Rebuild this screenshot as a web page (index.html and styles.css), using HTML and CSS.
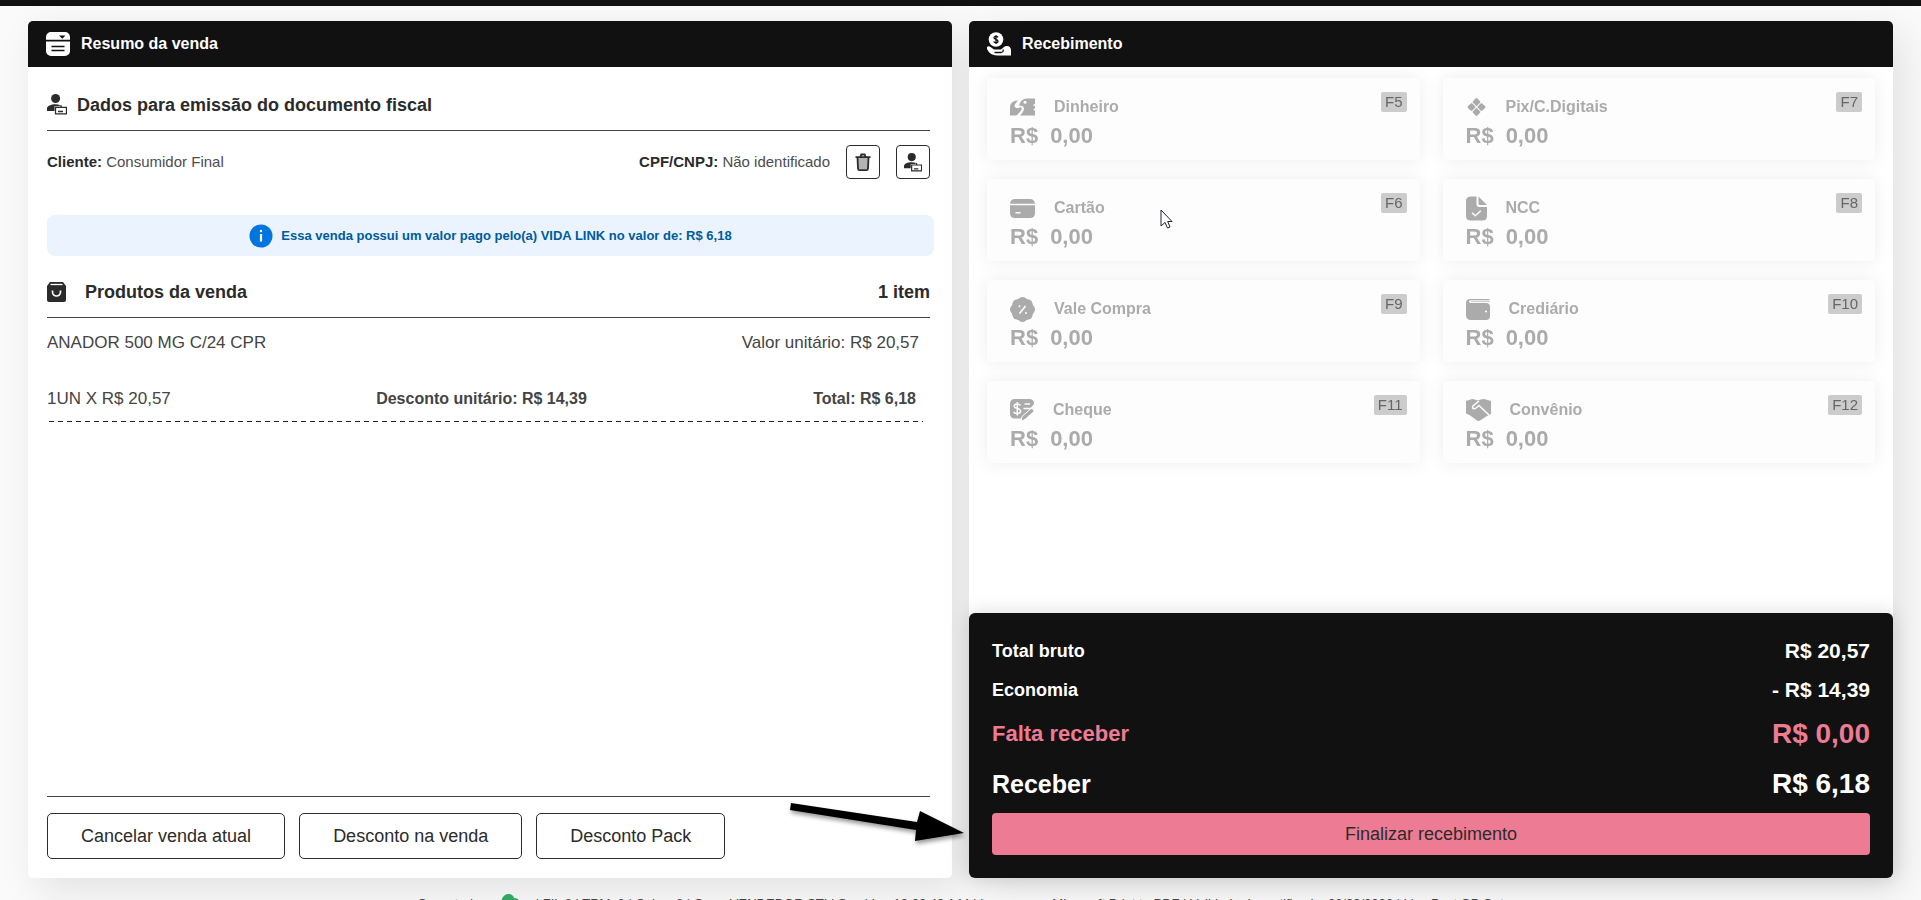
FILE: index.html
```html
<!DOCTYPE html>
<html lang="pt-BR">
<head>
<meta charset="utf-8">
<meta name="viewport" content="width=device-width, initial-scale=1">
<title>Recebimento da venda</title>
<link rel="stylesheet" href="styles.css">
</head>
<body>
<svg class="sprite" aria-hidden="true">
  <symbol id="person-card" viewBox="0 0 20 21">
    <circle cx="8.600" cy="4.500" r="4.500"/>
    <path d="M0 17v-2.500C0 12 4 10.300 8.600 10.300c1.500 0 3 .2 4.200.6v1.300H7.500V17z"/>
    <path d="M8.500 13.300h11v6.500h-11zM14 13.500v-2.500M11 17.500h5" fill="none" stroke="currentColor" stroke-width="1.300"/>
  </symbol>
</svg>
<div class="topbar"></div>
<main class="workspace">
  <section class="panel">
    <header class="panel-head">
      <svg class="head-icon" viewBox="0 0 24 24"><path fill="#fff" d="M5 0h14a5 5 0 0 1 5 5v2.700H0V5a5 5 0 0 1 5-5zM0 9.500h24V19a5 5 0 0 1-5 5H5a5 5 0 0 1-5-5z"/><path fill="#111" d="M13 3.500h6.500l-3.200 3.300z"/><path d="M5.500 14.500h13M5.500 18.500h13" stroke="#111" stroke-width="1.600"/></svg>
      <h1>Resumo da venda</h1>
    </header>
    <div class="sale">
      <div class="section-head">
        <svg class="person-icon"><use href="#person-card"/></svg>
        <h2>Dados para emissão do documento fiscal</h2>
      </div>
      <div class="customer">
        <p><b>Cliente:</b> Consumidor Final</p>
        <div class="document">
          <p><b>CPF/CNPJ:</b> Não identificado</p>
          <button class="icon-button" type="button" aria-label="Remover cliente"><svg width="16" height="19" viewBox="0 0 16 19"><path d="M3 5h10v11.500H3z" fill="#b3b3b3"/><path d="M2.500 4.500l.5 11q.1 1.700 1.600 1.700h6.800q1.500 0 1.600-1.700l.5-11M.5 4.200h15M5.500 3.800l.8-2.300h3.400l.8 2.300" fill="none" stroke="#2b2b2b" stroke-width="1.800"/></svg></button>
          <button class="icon-button" type="button" aria-label="Identificar cliente"><svg width="18" height="19"><use href="#person-card"/></svg></button>
        </div>
      </div>
      <div class="notice">
        <svg width="24" height="24" viewBox="0 0 24 24"><circle cx="12" cy="12" r="11.500" fill="#0074df"/><circle cx="12" cy="7" r="1.200" fill="#fff"/><path d="M12 10v7.500" stroke="#fff" stroke-width="2.200"/></svg>
        <strong>Essa venda possui um valor pago pelo(a) VIDA LINK no valor de: R$ 6,18</strong>
      </div>
      <div class="section-head products-head">
        <svg class="bag-icon" viewBox="0 0 19 20"><path fill="#2b2b2b" d="M3 0h13l3 4v14q0 2-2 2H2q-2 0-2-2V4z"/><path d="M3.500 2.500h12" stroke="#fff" stroke-width="1.300"/><path d="M5.500 8.500v1.500a4 4 0 0 0 8 0V8.500" fill="none" stroke="#fff" stroke-width="1.700"/></svg>
        <h2>Produtos da venda</h2>
        <strong class="count">1 item</strong>
      </div>
      <div class="product">
        <div class="product-name"><span>ANADOR 500 MG C/24 CPR</span><span>Valor unitário: R$ 20,57</span></div>
        <div class="product-values"><span>1UN X R$ 20,57</span><b>Desconto unitário: R$ 14,39</b><b>Total: R$ 6,18</b></div>
        <svg class="dashes" aria-hidden="true"><path d="M0 .5H4000" stroke="#222" stroke-width="1" stroke-dasharray="5 4"/></svg>
      </div>
      <div class="sale-actions">
        <button type="button">Cancelar venda atual</button>
        <button type="button">Desconto na venda</button>
        <button type="button">Desconto Pack</button>
      </div>
    </div>
  </section>

  <section class="panel">
    <header class="panel-head">
      <svg class="head-icon" viewBox="0 0 24 24"><circle cx="9" cy="7.500" r="7.300" fill="#fff"/><path d="M11 5.300C10.200 4 7 4 7 5.800S11 7.300 11 9.300 7.500 11 6.700 9.500M9 3v9" fill="none" stroke="#111" stroke-width="1.300"/><path fill="#fff" d="M0 15q1.500-1.500 3.500 0L7 17.500h7l3-2.500q1.500-1.300 3-1 3.500.2 4 4v5.500H10Q3 23.500 0 17z"/><path d="M7.500 20.500h6.500q3-.5 2-3" fill="none" stroke="#111" stroke-width="1.300"/></svg>
      <h1>Recebimento</h1>
    </header>
    <div class="methods">
      <button class="method" type="button"><span class="method-name"><svg width="25" height="18" viewBox="0 0 25 18"><path d="M0 17.500V9Q0 3 8 2.500L5.500 5.500Q3.500 8 5.500 9.500T10 9.200q2.500-.3 1.500 2.300T6.500 17.500z"/><path d="M9 7.500Q11 1 16 .5h9v5a4.200 4.200 0 0 0 0 7.500v4.500H10q4-4 4-7T9 7.500z"/><circle cx="15" cy="4.300" r="1.500" fill="#fdfdfd"/><circle cx="23.500" cy="9.200" r="1.800"/></svg>Dinheiro</span><span class="amount"><span>R$</span><span>0,00</span></span><kbd>F5</kbd></button>
      <button class="method" type="button"><span class="method-name"><svg width="21" height="18" viewBox="0 0 21 18"><g transform="translate(10.500 9)"><path d="M-4-5Q-1-9 0-9T4-5Q4-4.500 0-.8-4-4.500-4-5zM-4 5Q-1 9 0 9T4 5Q4 4.500 0 .8-4 4.500-4 5zM-5-4Q-9-1-9 0t4 4Q-4.500 4-.8 0-4.500-4-5-4zM5-4Q9-1 9 0T5 4Q4.500 4 .8 0 4.500-4 5-4z"/></g></svg>Pix/C.Digitais</span><span class="amount"><span>R$</span><span>0,00</span></span><kbd>F7</kbd></button>
      <button class="method" type="button"><span class="method-name"><svg width="25" height="19" viewBox="0 0 25 19"><path d="M5 0h15q4.500 0 5 4.800H0Q.5 0 5 0zM0 6.200h25V14q0 5-5 5H5q-5 0-5-5z"/><path d="M6 13.700h4" stroke="#fdfdfd" stroke-width="1.600" stroke-linecap="round"/></svg>Cartão</span><span class="amount"><span>R$</span><span>0,00</span></span><kbd>F6</kbd></button>
      <button class="method" type="button"><span class="method-name"><svg width="21" height="25" viewBox="0 0 21 25"><path d="M5 .5h5.500V8q0 3 3 3H21v9q0 4.500-4.500 4.500H5Q0 24.500 0 20V5Q0 .5 5 .5z"/><path d="M12.500.5 21 9h-7q-1.500 0-1.500-1.500z"/><path d="m6 16.700 3.300 3 5.500-5" fill="none" stroke="#fdfdfd" stroke-width="1.500"/></svg>NCC</span><span class="amount"><span>R$</span><span>0,00</span></span><kbd>F8</kbd></button>
      <button class="method" type="button"><span class="method-name"><svg width="25" height="25" viewBox="0 0 25 25"><circle cx="12.500" cy="12.500" r="11.300"/><circle cx="12.500" cy="4.500" r="4.500"/><circle cx="18" cy="7" r="4.500"/><circle cx="20.500" cy="12.500" r="4.500"/><circle cx="18" cy="18" r="4.500"/><circle cx="12.500" cy="20.500" r="4.500"/><circle cx="7" cy="18" r="4.500"/><circle cx="4.500" cy="12.500" r="4.500"/><circle cx="7" cy="7" r="4.500"/><path d="m15.500 9-6 7.500" stroke="#fdfdfd" stroke-width="1.700"/><circle cx="9.500" cy="9.200" r="1" fill="#fdfdfd"/><circle cx="16" cy="16" r="1" fill="#fdfdfd"/></svg>Vale Compra</span><span class="amount"><span>R$</span><span>0,00</span></span><kbd>F9</kbd></button>
      <button class="method" type="button"><span class="method-name"><svg width="24" height="21" viewBox="0 0 24 21"><path d="M4 0h18q1.500 0 2 1.300H4.500Q3 1.300 3 2.500T4.500 4H20q4 0 4 4v9q0 4-4 4H5q-5 0-5-5V4q0-4 4-4z"/><path d="M5 2.600h19" stroke="currentColor" stroke-width=".6"/><circle cx="20" cy="12.500" r="1.100" fill="#fdfdfd"/></svg>Crediário</span><span class="amount"><span>R$</span><span>0,00</span></span><kbd>F10</kbd></button>
      <button class="method" type="button"><span class="method-name"><svg width="24" height="22" viewBox="0 0 24 22"><path d="M5 0h14q5 0 5 5L11.500 19.500H5q-5 0-5-5V5q0-5 5-5z"/><path d="M10.500 6.500Q8.500 4.500 5.800 5.300 3 6.500 5 8.500l4 1.500q3 2 .5 4-3 1.500-6-.8M7.300 3v13.500M14.500 5H20M13.500 9.500H24" fill="none" stroke="#fdfdfd" stroke-width="1.500"/><path d="m11 22 1-4.500L21 9.500q3.500 0 3 3L15.500 20q-2 1.700-4.500 2z" stroke="#fdfdfd" stroke-width="1"/></svg>Cheque</span><span class="amount"><span>R$</span><span>0,00</span></span><kbd>F11</kbd></button>
      <button class="method" type="button"><span class="method-name"><svg width="25" height="22" viewBox="0 0 25 22"><path d="M0 2 6 0q3 0 5.500 1.500Q15 0 18 0l7 2v13l-4 2-7 4.500q-1.500.8-3 0L3.500 16 0 14.500z"/><path d="m13 2-6 5Q6 9.500 8 9.700q1.500.3 5-3.200l10 9.500" fill="none" stroke="#fdfdfd" stroke-width="1.600"/></svg>Convênio</span><span class="amount"><span>R$</span><span>0,00</span></span><kbd>F12</kbd></button>
    </div>
    <div class="totals">
      <dl>
        <div><dt>Total bruto</dt><dd>R$ 20,57</dd></div>
        <div><dt>Economia</dt><dd>- R$ 14,39</dd></div>
        <div class="remaining"><dt>Falta receber</dt><dd>R$ 0,00</dd></div>
        <div class="receive"><dt>Receber</dt><dd>R$ 6,18</dd></div>
      </dl>
      <button class="finish" type="button">Finalizar recebimento</button>
    </div>
  </section>
</main>
<footer class="status"><span>Conectado:</span><svg width="20" height="14" viewBox="0 0 20 14"><path fill="#2fa866" d="M1 10C1-1 12-3 14 4q6 0 6 6v4H1z"/></svg><span>| FIL 8 | TRM: 8 | Caixa: 8 | Oper: VENDEDOR STI | Servidor: 10.22.42.144 | Impressora: Microsoft Print to PDF | Validade do certificado: 06/09/2026 | Linx Post OP Out</span></footer>
<svg class="arrow" width="190" height="60" viewBox="0 0 190 60" aria-hidden="true"><path d="M7 5 133 24 136 13 180 35 131 43 132 32 6 12z"/></svg>
<svg class="cursor" width="14" height="22" viewBox="0 0 14 22" aria-hidden="true"><path d="M1 1v16l4-3.500 2.500 5.500 2.500-1-2.300-5.500H12z" fill="#fff" stroke="#223" stroke-width="1"/></svg>
</body>
</html>
```
FILE: styles.css
```css
* { box-sizing: border-box; }
body {
  margin: 0;
  height: 100vh;
  overflow: hidden;
  display: flex;
  flex-direction: column;
  background: #fafafa;
  color: #2b2b2b;
  font: 16px/20px "Liberation Sans", Arial, sans-serif;
}
h1, h2, p, dl, dd { margin: 0; }
button { font: inherit; color: inherit; cursor: pointer; }
svg { flex: none; fill: currentColor; }
.sprite { position: absolute; width: 0; height: 0; }
.topbar { height: 6px; flex: none; background: #111; }
.workspace {
  flex: 1;
  min-height: 0;
  display: grid;
  grid-template-columns: 1fr 1fr;
  gap: 17px;
  padding: 15px 28px 0;
}
.panel {
  display: flex;
  flex-direction: column;
  background: #fff;
  border-radius: 5px;
  box-shadow: 10px 12px 40px rgba(0, 0, 0, .1);
}
.panel-head {
  position: relative;
  z-index: 1;
  display: flex;
  align-items: center;
  gap: 11px;
  height: 46px;
  flex: none;
  padding: 0 18px;
  border-radius: 5px 5px 0 0;
  background: #111;
  color: #fff;
}
.panel-head h1 { font-size: 16px; }
.head-icon { width: 24px; height: 24px; }
.sale {
  flex: 1;
  display: flex;
  flex-direction: column;
  padding: 12px 22px 19px 19px;
}
.section-head {
  display: flex;
  align-items: center;
  gap: 10px;
  height: 52px;
  border-bottom: 1px solid #444;
}
.section-head h2, .count { font-size: 18px; }
.count { margin-left: auto; }
.person-icon { width: 20px; height: 21px; }
.bag-icon { width: 19px; height: 20px; }
.customer {
  display: flex;
  align-items: center;
  justify-content: space-between;
  padding: 14px 0;
  color: #4d4d4d;
  font-size: 15px;
}
.customer b { color: #2b2b2b; }
.document { display: flex; align-items: center; gap: 16px; }
.icon-button {
  display: grid;
  place-items: center;
  width: 34px;
  height: 34px;
  padding: 0;
  background: #fff;
  border: 1px solid #2b2b2b;
  border-radius: 4px;
  color: #2b2b2b;
}
.notice {
  display: flex;
  align-items: center;
  justify-content: center;
  gap: 8px;
  height: 41px;
  margin: 22px -4px 10px 0;
  border-radius: 8px;
  background: #eaf3fe;
  color: #005b9c;
  font-size: 13px;
}
.products-head { gap: 19px; }
.product { color: #444; font-size: 17px; }
.product-name { display: flex; justify-content: space-between; padding: 15px 11px 18px 0; }
.product-values {
  display: grid;
  grid-template-columns: 1fr auto 1fr;
  padding: 18px 14px 12px 0;
}
.product-values b { font-size: 16px; }
.product-values :last-child { text-align: right; }
.dashes { display: block; width: calc(100% - 9px); height: 1px; margin-left: 2px; }
.sale-actions {
  display: flex;
  gap: 14px;
  margin-top: auto;
  padding-top: 16px;
  border-top: 1px solid #444;
}
.sale-actions button {
  height: 46px;
  padding: 0 33px;
  background: #fff;
  border: 1px solid #2b2b2b;
  border-radius: 5px;
  font-size: 18px;
}
.methods {
  display: grid;
  grid-template-columns: 1fr 1fr;
  gap: 19px 23px;
  padding: 11px 18px;
}
.method {
  position: relative;
  display: flex;
  flex-direction: column;
  height: 82px;
  padding: 14px 23px 0;
  border: 0;
  border-radius: 4px;
  background: #fdfdfd;
  color: #ababab;
  text-align: left;
  font-weight: bold;
  filter: drop-shadow(0 0 8px rgba(0, 0, 0, .07));
}
.method-name { display: flex; align-items: center; gap: 19px; height: 30px; }
.amount { display: flex; gap: 12px; font-size: 22px; line-height: 28px; }
.method kbd {
  position: absolute;
  top: 14px;
  right: 13px;
  padding: 0 4px;
  border-radius: 2px;
  background: #ccc;
  color: #666;
  font: 15px/20px "Liberation Sans", Arial, sans-serif;
}
.totals {
  margin-top: auto;
  padding: 18px 23px 23px;
  border-radius: 6px;
  background: #111;
  color: #fff;
  box-shadow: 0 0 20px rgba(0, 0, 0, .15);
}
.totals dl { padding-bottom: 4px; font-weight: bold; font-size: 18px; }
.totals dl div { display: flex; align-items: center; justify-content: space-between; height: 39px; }
.totals dd { font-size: 21px; }
.totals dl .remaining { height: 50px; color: #ed7b93; font-size: 22px; }
.totals .remaining dd { font-size: 28px; }
.totals dl .receive { height: 50px; font-size: 25px; }
.totals .receive dd { font-size: 28px; }
.finish {
  width: 100%;
  height: 42px;
  border: 0;
  border-radius: 4px;
  background: #ed7b93;
  color: #2b2b2b;
  font-size: 18px;
}
.status {
  height: 22px;
  flex: none;
  display: flex;
  justify-content: center;
  gap: 16px;
  padding-top: 16px;
  color: #444;
  font-size: 13px;
  line-height: 20px;
  white-space: nowrap;
}
.arrow { position: absolute; z-index: 2; left: 784px; top: 798px; fill: #000; filter: drop-shadow(1px 3px 2px rgba(0, 0, 0, .4)); }
.cursor { position: absolute; z-index: 2; left: 1160px; top: 209px; }
```
